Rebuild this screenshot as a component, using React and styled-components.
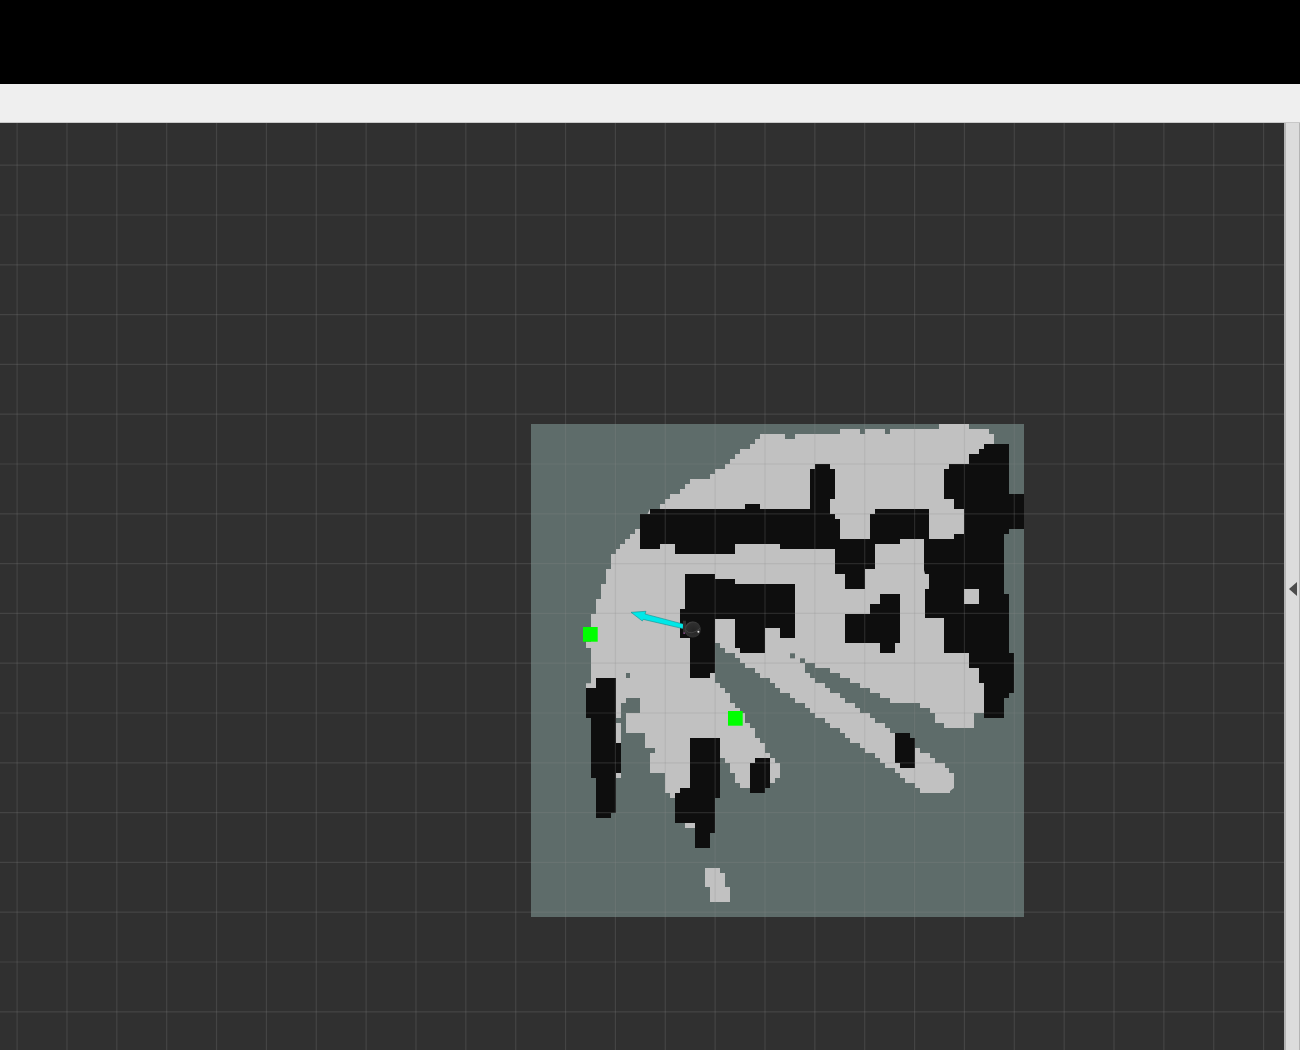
import styled, { createGlobalStyle } from 'styled-components';

const GlobalStyle = createGlobalStyle`
  html, body {
    margin: 0;
    padding: 0;
    height: 100%;
    overflow: hidden;
    background: #000000;
    font-family: "Liberation Sans", sans-serif;
  }
`;

// the outlines below were read off 3x crops, so each block has its own origin
const TOP_LEFT = [530, 420];
const TOP_RIGHT = [780, 420];
const BOTTOM_LEFT = [530, 670];
const BOTTOM_RIGHT = [780, 670];

const toPoints = ([ox, oy], list) => {
  const n = list.trim().split(/\s+/).map(Number);
  const out = [];
  for (let i = 0; i < n.length; i += 2) {
    out.push(`${ox + n[i] / 3},${oy + n[i + 1] / 3}`);
  }
  return out.join(' ');
};

const FREE_SPACE = [
  toPoints(TOP_LEFT, `690 42`),
  toPoints(TOP_RIGHT, `0 42 15 42 15 57 45 57 45 42 180 42 180 27 240 27 240 42 255 42 255 27 315 27 315 42 330 42 330 27
    477 27 477 12 567 12 567 27 627 27 627 42 642 42 642 72 640 100 620 700`),
  toPoints(BOTTOM_RIGHT, `620 120 612 129 582 129 582 174 492 174 492 159 465 159 465 129 450 129 450 114 420 114 420 99
    330 99 330 84 300 84 300 69 270 69 270 54 240 54 240 39 210 39 210 24 180 24 180 9 150 9 150 0`),
  toPoints(TOP_RIGHT, `150 744 105 744 105 729 75 729`),
  toPoints(BOTTOM_RIGHT, `75 0 75 9 90 9 90 24 105 24 105 39 135 39 135 54 150 54 150 69 180 69 180 84 195 84 195 99
    225 99 225 114 240 114 240 129 270 129 270 144 285 144 285 159 315 159 315 174 330 174 330 189 345 189 390 204 405 234
    420 234 420 249 450 249 450 264 465 264 465 279 495 279 495 294 507 294 507 309 522 309 522 354 510 363 510 369
    420 369 420 354 405 354 405 339 375 339 375 324 360 324 360 309 345 309 345 294 315 294 315 279 300 279 300 264
    285 264 285 249 255 249 255 234 240 234 240 219 210 219 210 204 195 204 195 189 180 189 180 174 150 174 150 159
    135 159 135 144 105 144 105 129 90 129 90 114 75 114 75 99 45 99 45 84 30 84 30 69 0 69`),
  toPoints(BOTTOM_LEFT, `750 54 735 54 735 39 720 39 720 24 690 24 690 9 675 9 675 0`),
  toPoints(TOP_LEFT, `675 744 645 744 645 729 630 729 630 714 615 714 615 699 585 699 585 684 570 684 570 669 555 669`),
  toPoints(BOTTOM_LEFT, `555 0 555 39 570 39 570 54 585 54 585 69 600 69 600 99 615 99 615 114 630 114 630 129 645 129
    645 159 660 159 660 174 675 174 675 204 690 204 690 219 705 219 705 249 720 249 720 264 735 264 735 279 750 279
    750 324 735 324 735 339 720 339 720 354 630 354 630 339 615 339 615 309 600 309 600 279 585 279 585 264 570 264
    570 300 480 384 420 384 420 369 405 369 405 309 360 309 360 249 375 249 375 234 345 234 345 189 288 189 288 129
    330 129 330 84 288 84 288 99 273 99 273 144 258 144 258 100 198 54 168 54 168 40 183 40 183 0`),
  toPoints(TOP_LEFT, `183 750 183 684 168 684 168 665 183 665 183 582 198 582 198 537 213 537 213 492 228 492 228 447
    243 447 243 402 258 402 258 387 270 387 270 372 285 372 285 357 300 357 300 342 315 342 315 327 330 327 360 267
    390 267 390 252 405 252 405 237 420 237 420 222 450 222 450 207 465 207 465 192 480 192 480 177 540 177 540 162
    555 162 555 147 585 147 585 132 600 132 600 117 615 117 615 102 630 102 630 87 660 87 660 72 675 72 675 57 690 57`),
].join(' ');

const FREE_PATCHES = [
  toPoints(BOTTOM_LEFT, `258 159 273 159 273 219 258 219`),
  toPoints(BOTTOM_LEFT, `258 309 273 309 273 324 258 324`),
  toPoints(BOTTOM_LEFT, `525 594 570 594 570 609 585 609 585 651 600 651 600 696 540 696 540 651 525 651`),
];

const OBSTACLES = [
  // the long wall and the mass down the right side
  [
    toPoints(TOP_LEFT, `360 267 645 267 645 252 690 252 690 267`),
    toPoints(TOP_RIGHT, `90 267 90 147 105 147 105 132 150 132 150 147 165 147 165 237 150 237 150 282 165 282 165 297
      180 297 180 357 270 357 270 282 285 282 285 267 447 267 447 357 522 357 522 342 552 342 552 267 522 267 522 237
      492 237 492 147 507 147 507 132 567 132 567 102 597 102 597 87 612 87 612 72 687 72 687 222 732 222 732 327
      687 327 687 342 672 342 672 522 687 522 687 699 702 699 702 750`),
    toPoints(BOTTOM_RIGHT, `702 69 687 69 687 84 672 84 672 144 612 144 612 39 597 39 597 0`),
    toPoints(TOP_RIGHT, `597 744 567 744 567 699 492 699 492 594 435 594 435 507 447 507 447 462 435 462 432 450 432 357
      360 357 360 372 285 372 285 447 255 447 255 507 195 507 195 462 165 462 165 387 0 387`),
    toPoints(TOP_LEFT, `750 372 615 372 615 402 435 402 435 372 390 372 390 387 330 387 330 282 360 282`),
  ].join(' '),
  // the block and column beside the robot
  [
    toPoints(TOP_LEFT, `465 462 555 462 555 477 615 477 615 492 750 492`),
    toPoints(TOP_RIGHT, `45 492 45 654 0 654`),
    toPoints(TOP_LEFT, `750 624 705 624 705 699 630 699 630 684 615 684 615 597 555 597 555 750`),
    toPoints(BOTTOM_LEFT, `555 9 540 9 540 24 480 24 480 0`),
    toPoints(TOP_LEFT, `480 654 450 654 450 567 465 567`),
  ].join(' '),
  toPoints(TOP_RIGHT, `195 582 270 582 270 552 300 552 300 522 360 522 360 669 345 669 345 699 300 699 300 669 195 669`),
  toPoints(BOTTOM_LEFT, `198 24 258 24 258 219 273 219 273 309 258 309 258 429 243 429 243 444 198 444 198 324 183 324
    183 144 168 144 168 54 198 54`),
  toPoints(BOTTOM_LEFT, `480 204 570 204 570 384 555 384 555 489 540 489 540 534 495 534 495 474 465 474 465 459 435 459
    435 369 450 369 450 354 480 354`),
  toPoints(BOTTOM_LEFT, `675 264 720 264 720 354 705 354 705 369 660 369 660 279 675 279`),
  toPoints(BOTTOM_RIGHT, `345 189 390 189 390 204 405 204 405 294 360 294 360 279 345 279`),
];

const ISLANDS = [
  toPoints(TOP_RIGHT, `552 507 597 507 597 552 552 552`),
  toPoints(BOTTOM_LEFT, `465 459 495 459 495 474 465 474`),
];

const UNKNOWN_SPOTS = [
  toPoints(BOTTOM_LEFT, `288 9 300 9 300 24 288 24`),
  toPoints(BOTTOM_LEFT, `258 144 273 144 273 159 258 159`),
  toPoints(TOP_RIGHT, `30 700 45 700 45 715 30 715`),
  toPoints(TOP_RIGHT, `60 715 75 715 75 729 60 729`),
];

const GRID_X = Array.from({ length: 26 }, (_, i) => 17.1 + i * 49.86);
const GRID_Y = Array.from({ length: 18 }, (_, i) => 165.2 + i * 49.8);

function MapView() {
  return (
    <Viewport viewBox="0 123 1284 927" preserveAspectRatio="none">
      <defs>
        <radialGradient id="robotShade" cx="0.55" cy="0.55" r="0.6">
          <stop offset="0" stopColor="#242424" />
          <stop offset="0.75" stopColor="#2f2f2f" />
          <stop offset="1" stopColor="#505050" />
        </radialGradient>
      </defs>
      <rect x="531" y="424" width="493" height="493" fill="#5e6c6a" />
      <polygon points={FREE_SPACE} fill="#c1c1c1" />
      {FREE_PATCHES.map((p, i) => <polygon key={i} points={p} fill="#c1c1c1" />)}
      {UNKNOWN_SPOTS.map((p, i) => <polygon key={i} points={p} fill="#5e6c6a" />)}
      {OBSTACLES.map((p, i) => <polygon key={i} points={p} fill="#0e0e0e" />)}
      {ISLANDS.map((p, i) => <polygon key={i} points={p} fill="#c1c1c1" />)}

      {GRID_X.map((x) => <line key={x} x1={x} x2={x} y1="123" y2="1050" stroke="#8c8c8c" strokeOpacity="0.22" strokeWidth="1.2" />)}
      {GRID_Y.map((y) => <line key={y} x1="0" x2="1284" y1={y} y2={y} stroke="#8c8c8c" strokeOpacity="0.22" strokeWidth="1.2" />)}

      <rect x="583" y="627" width="14.7" height="14.7" fill="#00ff00" />
      <rect x="728" y="711" width="14.7" height="14.7" fill="#00ff00" />

      <polygon
        points="631,612.3 646,611.3 645,614 683.6,624.2 682.8,628.6 643.3,619.4 642.3,621"
        fill="#00e8e8"
        stroke="#168f8f"
        strokeWidth="0.6"
      />
      <rect x="683" y="620.7" width="3" height="12.6" fill="#303030" />
      <rect x="683.4" y="632.5" width="1.6" height="1.4" fill="#8a4a8a" />
      <circle cx="692.8" cy="629.5" r="8" fill="url(#robotShade)" />
      <path d="M685.5 630 Q691 636.5 700.5 628" fill="none" stroke="#4c4c4c" strokeWidth="0.7" />
      <circle cx="698.4" cy="631.7" r="1" fill="#e2e2e2" />
    </Viewport>
  );
}

export default function App() {
  return (
    <>
      <GlobalStyle />
      <Page>
        <TopBar />
        <Toolbar />
        <Workspace>
          <MapView />
          <SidePanel>
            <CollapseArrow />
          </SidePanel>
        </Workspace>
      </Page>
    </>
  );
}

const Page = styled.div`
  display: flex;
  flex-direction: column;
  width: 1300px;
  height: 1050px;
  overflow: hidden;
`;

const TopBar = styled.div`
  height: 84px;
  flex: none;
  background-color: #000000;
`;

const Toolbar = styled.div`
  height: 38px;
  flex: none;
  background-color: #efefef;
  border-bottom: 1px solid #c8c8c8;
`;

const Workspace = styled.div`
  flex: 1;
  display: flex;
  min-height: 0;
`;

const Viewport = styled.svg`
  display: block;
  width: 1284px;
  height: 927px;
  flex: none;
  background-color: #303030;
`;

const SidePanel = styled.div`
  flex: 1;
  display: flex;
  align-items: center;
  justify-content: center;
  box-sizing: border-box;
  padding-top: 4px;
  background-color: #dcdcdc;
  border-left: 2px solid #b4b4b4;
  border-right: 1px solid #b4b4b4;
`;

const CollapseArrow = styled.div`
  width: 0;
  height: 0;
  border-top: 7px solid transparent;
  border-bottom: 7px solid transparent;
  border-right: 8px solid #4c4c4c;
`;
